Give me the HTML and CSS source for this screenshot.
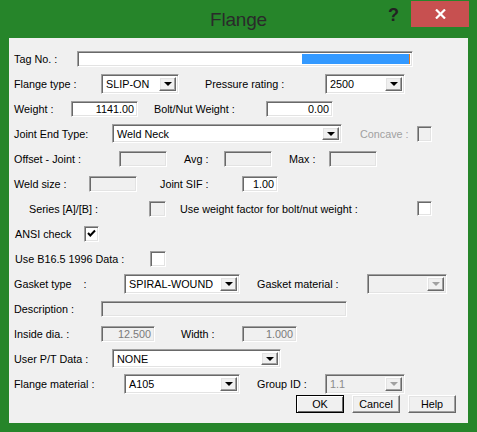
FILE: index.html
```html
<!DOCTYPE html>
<html>
<head>
<meta charset="utf-8">
<link rel="stylesheet" href="styles.css">
</head>
<body>
<div class="window">
  <div class="titlebar">
    <div></div>
    <div class="title">Flange</div>
    <div class="tools">
      <span class="help-q">?</span>
      <div class="close">
        <svg width="11" height="10" viewBox="0 0 11 10"><path d="M1 0.5 L10 9.5 M10 0.5 L1 9.5" stroke="#fff" stroke-width="2.2" fill="none"/></svg>
      </div>
    </div>
  </div>
  <div class="client">
    <div class="row">
      <span class="lbl l-tag">Tag No. :</span>
      <div class="field f-tag"><span class="sel"></span></div>
    </div>
    <div class="row">
      <span class="lbl l-ftype">Flange type :</span>
      <div class="combo c-ftype"><span class="val">SLIP-ON</span><span class="cbtn"><i class="arrow"></i></span></div>
      <span class="lbl l-press">Pressure rating :</span>
      <div class="combo c-press"><span class="val">2500</span><span class="cbtn"><i class="arrow"></i></span></div>
    </div>
    <div class="row">
      <span class="lbl l-weight">Weight :</span>
      <div class="field num f-weight">1141.00</div>
      <span class="lbl l-bolt">Bolt/Nut Weight :</span>
      <div class="field num f-bolt">0.00</div>
    </div>
    <div class="row">
      <span class="lbl l-joint">Joint End Type:</span>
      <div class="combo tall c-joint"><span class="val">Weld Neck</span><span class="cbtn"><i class="arrow"></i></span></div>
      <span class="lbl dis l-concave">Concave :</span>
      <span class="check off c-concave"></span>
    </div>
    <div class="row">
      <span class="lbl l-offset">Offset - Joint :</span>
      <div class="field off f-small"></div>
      <span class="lbl l-avg">Avg :</span>
      <div class="field off f-small"></div>
      <span class="lbl l-max">Max :</span>
      <div class="field off f-small"></div>
    </div>
    <div class="row">
      <span class="lbl l-weld">Weld size :</span>
      <div class="field off f-small"></div>
      <span class="lbl l-sif">Joint SIF :</span>
      <div class="field num f-sif">1.00</div>
    </div>
    <div class="row">
      <span class="lbl l-series">Series [A]/[B] :</span>
      <span class="check off c-series"></span>
      <span class="lbl l-usewt">Use weight factor for bolt/nut weight :</span>
      <span class="check c-usewt"></span>
    </div>
    <div class="row">
      <span class="lbl l-ansi">ANSI check</span>
      <span class="check c-ansi"><svg width="9" height="9" viewBox="0 0 9 9"><path d="M1 4 L3.3 6.5 L8 1.5" stroke="#000" stroke-width="2" fill="none"/></svg></span>
    </div>
    <div class="row">
      <span class="lbl l-b16">Use B16.5 1996 Data :</span>
      <span class="check c-b16"></span>
    </div>
    <div class="row">
      <span class="lbl l-gasket">Gasket type    :</span>
      <div class="combo c-gasket"><span class="val">SPIRAL-WOUND</span><span class="cbtn"><i class="arrow"></i></span></div>
      <span class="lbl l-gmat">Gasket material :</span>
      <div class="combo off c-right"><span class="val"></span><span class="cbtn"><i class="arrow"></i></span></div>
    </div>
    <div class="row">
      <span class="lbl l-desc">Description :</span>
      <div class="field off f-desc"></div>
    </div>
    <div class="row">
      <span class="lbl l-inside">Inside dia. :</span>
      <div class="field num off f-inside">12.500</div>
      <span class="lbl l-width">Width :</span>
      <div class="field num off f-width">1.000</div>
    </div>
    <div class="row">
      <span class="lbl l-userpt">User P/T Data :</span>
      <div class="combo tall c-userpt"><span class="val">NONE</span><span class="cbtn"><i class="arrow"></i></span></div>
    </div>
    <div class="row">
      <span class="lbl l-fmat">Flange material :</span>
      <div class="combo c-gasket"><span class="val">A105</span><span class="cbtn"><i class="arrow"></i></span></div>
      <span class="lbl l-group">Group ID :</span>
      <div class="combo off c-right"><span class="val">1.1</span><span class="cbtn"><i class="arrow"></i></span></div>
    </div>
    <div class="buttons">
      <button class="btn default">OK</button>
      <button class="btn">Cancel</button>
      <button class="btn">Help</button>
    </div>
  </div>
</div>
</body>
</html>
```
FILE: styles.css
```css
* { box-sizing: border-box; }
html, body { margin: 0; padding: 0; }
body {
  font-family: "Liberation Sans", Arial, sans-serif;
  font-size: 10.8px;
  color: #000;
  background: #26852a;
}
.window {
  width: 477px;
  height: 432px;
  background: #26852a;
  overflow: hidden;
}
.titlebar {
  height: 38px;
  display: grid;
  grid-template-columns: 1fr auto 1fr;
}
.title {
  font-size: 19px;
  line-height: 22px;
  margin-top: 9px;
  color: #2a2a2a;
  letter-spacing: -0.2px;
  align-self: start;
}
.tools {
  display: flex;
  justify-content: flex-end;
  align-items: flex-start;
}
.help-q {
  font-weight: bold;
  font-size: 18px;
  line-height: 20px;
  margin-top: 5px;
  color: #222;
}
.close {
  width: 58px;
  height: 26px;
  margin-top: 1px;
  margin-left: 12px;
  margin-right: 8px;
  background: #c75050;
  display: flex;
  align-items: center;
  justify-content: center;
}
.client {
  margin-left: 9px;
  width: 459px;
  height: 385px;
  background: #f0f0f0;
  padding-top: 8px;
}
.row {
  display: flex;
  align-items: center;
  height: 25px;
  padding-left: 5px;
}
.lbl {
  flex: none;
  white-space: pre;
}
.dis { color: #a0a0a0; }

/* sunken controls */
.field, .combo, .check {
  flex: none;
  border: 1px solid;
  border-color: #a0a0a0 #ffffff #ffffff #a0a0a0;
  box-shadow: inset 1px 1px 0 #696969, inset -1px -1px 0 #e3e3e3;
  background: #fff;
}
.field {
  height: 16px;
  padding: 0 3px;
  display: flex;
  align-items: center;
  line-height: 12px;
}
.field.num { justify-content: flex-end; }
.off { background: #f0f0f0; color: #7a7a7a; }

.f-tag { width: 336px; padding: 2px; justify-content: flex-end; align-items: stretch; }
.sel { width: 108px; background: #3399ff; border-right: 1px solid #e07c22; }

.combo {
  height: 20px;
  display: flex;
  padding: 2px;
}
.combo.tall { height: 19px; }
.val {
  flex: 1;
  padding-left: 2px;
  display: flex;
  align-items: center;
  white-space: nowrap;
  overflow: hidden;
}
.cbtn {
  width: 17px;
  flex: none;
  background: #f0f0f0;
  border: 1px solid;
  border-color: #ffffff #696969 #696969 #ffffff;
  box-shadow: inset -1px -1px 0 #a0a0a0, inset 1px 1px 0 #e3e3e3;
  display: flex;
  align-items: center;
  justify-content: center;
}
.arrow {
  width: 0;
  height: 0;
  border-left: 4px solid transparent;
  border-right: 4px solid transparent;
  border-top: 4px solid #000;
  margin-top: 1px;
}
.combo.off .arrow { border-top-color: #a0a0a0; }
.combo.off .val { color: #8a8a8a; }

.check {
  width: 15px;
  height: 16px;
  display: flex;
  align-items: center;
  justify-content: center;
}
.check.off { background: #f0f0f0; }

/* label widths / offsets */
.l-tag { width: 63px; }
.l-ftype { width: 87px; }
.c-ftype { width: 78px; }
.l-press { margin-left: 26px; width: 120px; }
.c-press { width: 80px; }
.l-weight { width: 57px; }
.f-weight { width: 67px; }
.l-bolt { margin-left: 16px; width: 112px; }
.f-bolt { width: 67px; }
.l-joint { width: 98px; }
.c-joint { width: 230px; }
.l-concave { margin-left: 18px; width: 57px; }
.l-offset { width: 105px; }
.f-small { width: 48px; }
.l-avg { margin-left: 17px; width: 40px; }
.l-max { margin-left: 17px; width: 40px; }
.l-weld { width: 75px; }
.l-sif { margin-left: 23px; width: 82px; }
.f-sif { width: 36px; }
.l-series { margin-left: 15px; width: 120px; }
.c-series { width: 17px; }
.l-usewt { margin-left: 14px; width: 237px; }
.c-usewt { height: 15px; }
.l-ansi { margin-left: 1px; width: 69px; }
.l-b16 { margin-left: 1px; width: 135px; }
.c-b16 { width: 16px; }
.l-gasket { width: 110px; }
.c-gasket { width: 116px; }
.l-gmat { margin-left: 17px; width: 110px; }
.c-right { width: 80px; }
.l-desc { width: 87px; }
.f-desc { width: 246px; }
.l-inside { width: 87px; }
.f-inside { width: 54px; }
.l-width { margin-left: 26px; width: 61px; }
.f-width { width: 55px; }
.l-userpt { width: 98px; }
.c-userpt { width: 169px; }
.l-fmat { width: 110px; }
.l-group { margin-left: 17px; width: 68px; }

.buttons {
  display: flex;
  justify-content: flex-end;
  gap: 8px;
  padding-right: 12px;
  margin-top: -1px;
}
.btn {
  width: 48px;
  height: 18px;
  padding: 0;
  font: inherit;
  color: #000;
  background: #f0f0f0;
  border: 1px solid;
  border-color: #ffffff #696969 #696969 #ffffff;
  box-shadow: inset -1px -1px 0 #a0a0a0, inset 1px 1px 0 #e3e3e3;
}
.btn.default {
  border-color: #000;
  box-shadow: inset 1px 1px 0 #fff, inset -1px -1px 0 #696969;
}
```
